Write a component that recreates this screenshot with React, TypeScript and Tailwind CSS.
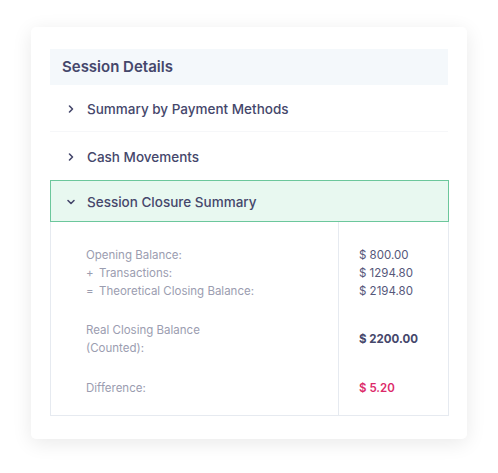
import React from "react";

const Chevron = ({ down = false }: { down?: boolean }) => (
  <svg width="10" height="10" viewBox="0 0 10 10" className="shrink-0">
    {down ? (
      <path d="M2 3.5 L5 6.5 L8 3.5" fill="none" stroke="#45476b" strokeWidth="1.6" strokeLinecap="round" strokeLinejoin="round" />
    ) : (
      <path d="M3.5 2 L6.5 5 L3.5 8" fill="none" stroke="#45476b" strokeWidth="1.6" strokeLinecap="round" strokeLinejoin="round" />
    )}
  </svg>
);

export default function App() {
  return (
    <div className="w-[498px] h-[473px] bg-white pt-[27px] pl-[31px]" style={{ fontFamily: "Inter, 'Noto Sans', sans-serif" }}>
      <div className="w-[436px] h-[412px] bg-white rounded-[5px] shadow-[0_4px_20px_rgba(0,0,0,0.09)] pt-[22px] pl-[19px]">
        <div className="w-[398px]">
          <div className="h-[36px] bg-[#f4f8fb] flex items-center pl-[12px] pt-[1px] text-[15px] font-semibold text-[#45476b]">
            Session Details
          </div>
          <div className="h-[47px] flex items-center pl-[16px] pt-[2px] gap-[11px] border-b border-[#f6f7f9] text-[13.5px] font-medium text-[#45476b]">
            <Chevron />
            <span>Summary by Payment Methods</span>
          </div>
          <div className="h-[48px] flex items-center pl-[16px] pt-[2px] gap-[11px] text-[13.5px] font-medium text-[#45476b]">
            <Chevron />
            <span>Cash Movements</span>
          </div>
          <div className="h-[42px] w-[399px] flex items-center pl-[15px] pt-[2px] gap-[11px] bg-[#e8f8f0] border border-[#6cc79c] text-[13.5px] font-medium text-[#45476b]">
            <Chevron down />
            <span>Session Closure Summary</span>
          </div>
          <div className="flex w-[399px] h-[194px] border border-t-0 border-[#e6eaf0] text-[11.5px]">
            <div className="w-[288px] border-r border-[#e6eaf0] pl-[35px] pt-[24px] text-[#9b9db0] leading-[18px]">
              <div>Opening Balance:</div>
              <div className="flex"><span className="w-[13px]">+</span>Transactions:</div>
              <div className="flex"><span className="w-[13px]">=</span>Theoretical Closing Balance:</div>
              <div className="mt-[21px]">Real Closing Balance</div>
              <div>(Counted):</div>
              <div className="mt-[22px]">Difference:</div>
            </div>
            <div className="flex-1 pl-[20px] pt-[24px] text-[#55577a] leading-[18px]">
              <div>$ 800.00</div>
              <div>$ 1294.80</div>
              <div>$ 2194.80</div>
              <div className="mt-[30px] font-bold text-[#45476b]">$ 2200.00</div>
              <div className="mt-[31px] font-semibold text-[#dc2a6a]">$ 5.20</div>
            </div>
          </div>
        </div>
      </div>
    </div>
  );
}
